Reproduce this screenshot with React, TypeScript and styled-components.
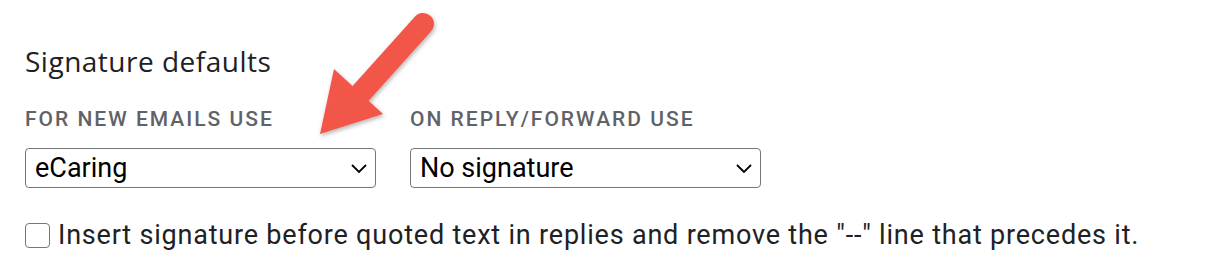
import React from 'react';
import styled, { createGlobalStyle } from 'styled-components';

const GlobalStyle = createGlobalStyle`
  html, body {
    margin: 0;
    padding: 0;
    background: #ffffff;
  }
  body {
    font-family: Roboto, "Liberation Sans", Arial, sans-serif;
    color: #202124;
  }
`;

const Page = styled.div`
  position: relative;
  width: 1214px;
  height: 270px;
  padding: 43px 0 0 25px;
  box-sizing: border-box;
  overflow: hidden;
`;

const Title = styled.h2`
  margin: 0;
  font-family: "Open Sans", Roboto, sans-serif;
  font-weight: 500;
  font-size: 28px;
  line-height: 36px;
  letter-spacing: 0.5px;
  color: #202124;
`;

const Row = styled.div`
  display: flex;
  gap: 34px;
  margin-top: 27px;
`;

const Field = styled.div`
  display: flex;
  flex-direction: column;
  gap: 16px;
`;

const Label = styled.div`
  font-size: 21px;
  font-weight: 500;
  letter-spacing: 2px;
  line-height: 26px;
  text-transform: uppercase;
  color: #5f6368;
`;

const Select = styled.div`
  display: flex;
  align-items: center;
  justify-content: space-between;
  width: 351px;
  height: 40px;
  box-sizing: border-box;
  padding: 0 7px 0 9px;
  border: 1.5px solid #767676;
  border-radius: 4px;
  font-size: 27px;
  color: #000;
`;

const CheckRow = styled.label`
  display: flex;
  align-items: center;
  gap: 8px;
  margin-top: 32px;
  font-size: 27px;
  line-height: 30px;
  letter-spacing: 0.8px;
  color: #202124;
`;

const Box = styled.span`
  width: 25px;
  height: 25px;
  box-sizing: border-box;
  border: 1.5px solid #767676;
  border-radius: 4px;
  flex: none;
`;

const Arrow = styled.svg`
  position: absolute;
  left: 300px;
  top: 0;
  overflow: visible;
`;

const Chevron = () => (
  <svg width="18" height="12" viewBox="0 0 18 12">
    <path d="M2 3 L9 10 L16 3" fill="none" stroke="#000" strokeWidth="1.8" />
  </svg>
);

const SelectBox: React.FC<{ value: string }> = ({ value }) => (
  <Select>
    <span>{value}</span>
    <Chevron />
  </Select>
);

export default function App() {
  return (
    <>
      <GlobalStyle />
      <Page>
        <Title>Signature defaults</Title>
        <Row>
          <Field>
            <Label>For new emails use</Label>
            <SelectBox value="eCaring" />
          </Field>
          <Field>
            <Label>On reply/forward use</Label>
            <SelectBox value="No signature" />
          </Field>
        </Row>
        <CheckRow>
          <Box />
          <span>Insert signature before quoted text in replies and remove the "--" line that precedes it.</span>
        </CheckRow>
        <Arrow width="160" height="150" viewBox="300 0 160 150">
          <defs>
            <filter id="sh" x="-20%" y="-20%" width="140%" height="140%">
              <feDropShadow dx="1" dy="2" stdDeviation="2" floodColor="#000" floodOpacity="0.3" />
            </filter>
          </defs>
          <g filter="url(#sh)" fill="#f2574a">
            <line x1="423" y1="24" x2="352" y2="103" stroke="#f2574a" strokeWidth="22" strokeLinecap="round" />
            <polygon points="320,134 334,69 383,114" />
          </g>
        </Arrow>
      </Page>
    </>
  );
}
